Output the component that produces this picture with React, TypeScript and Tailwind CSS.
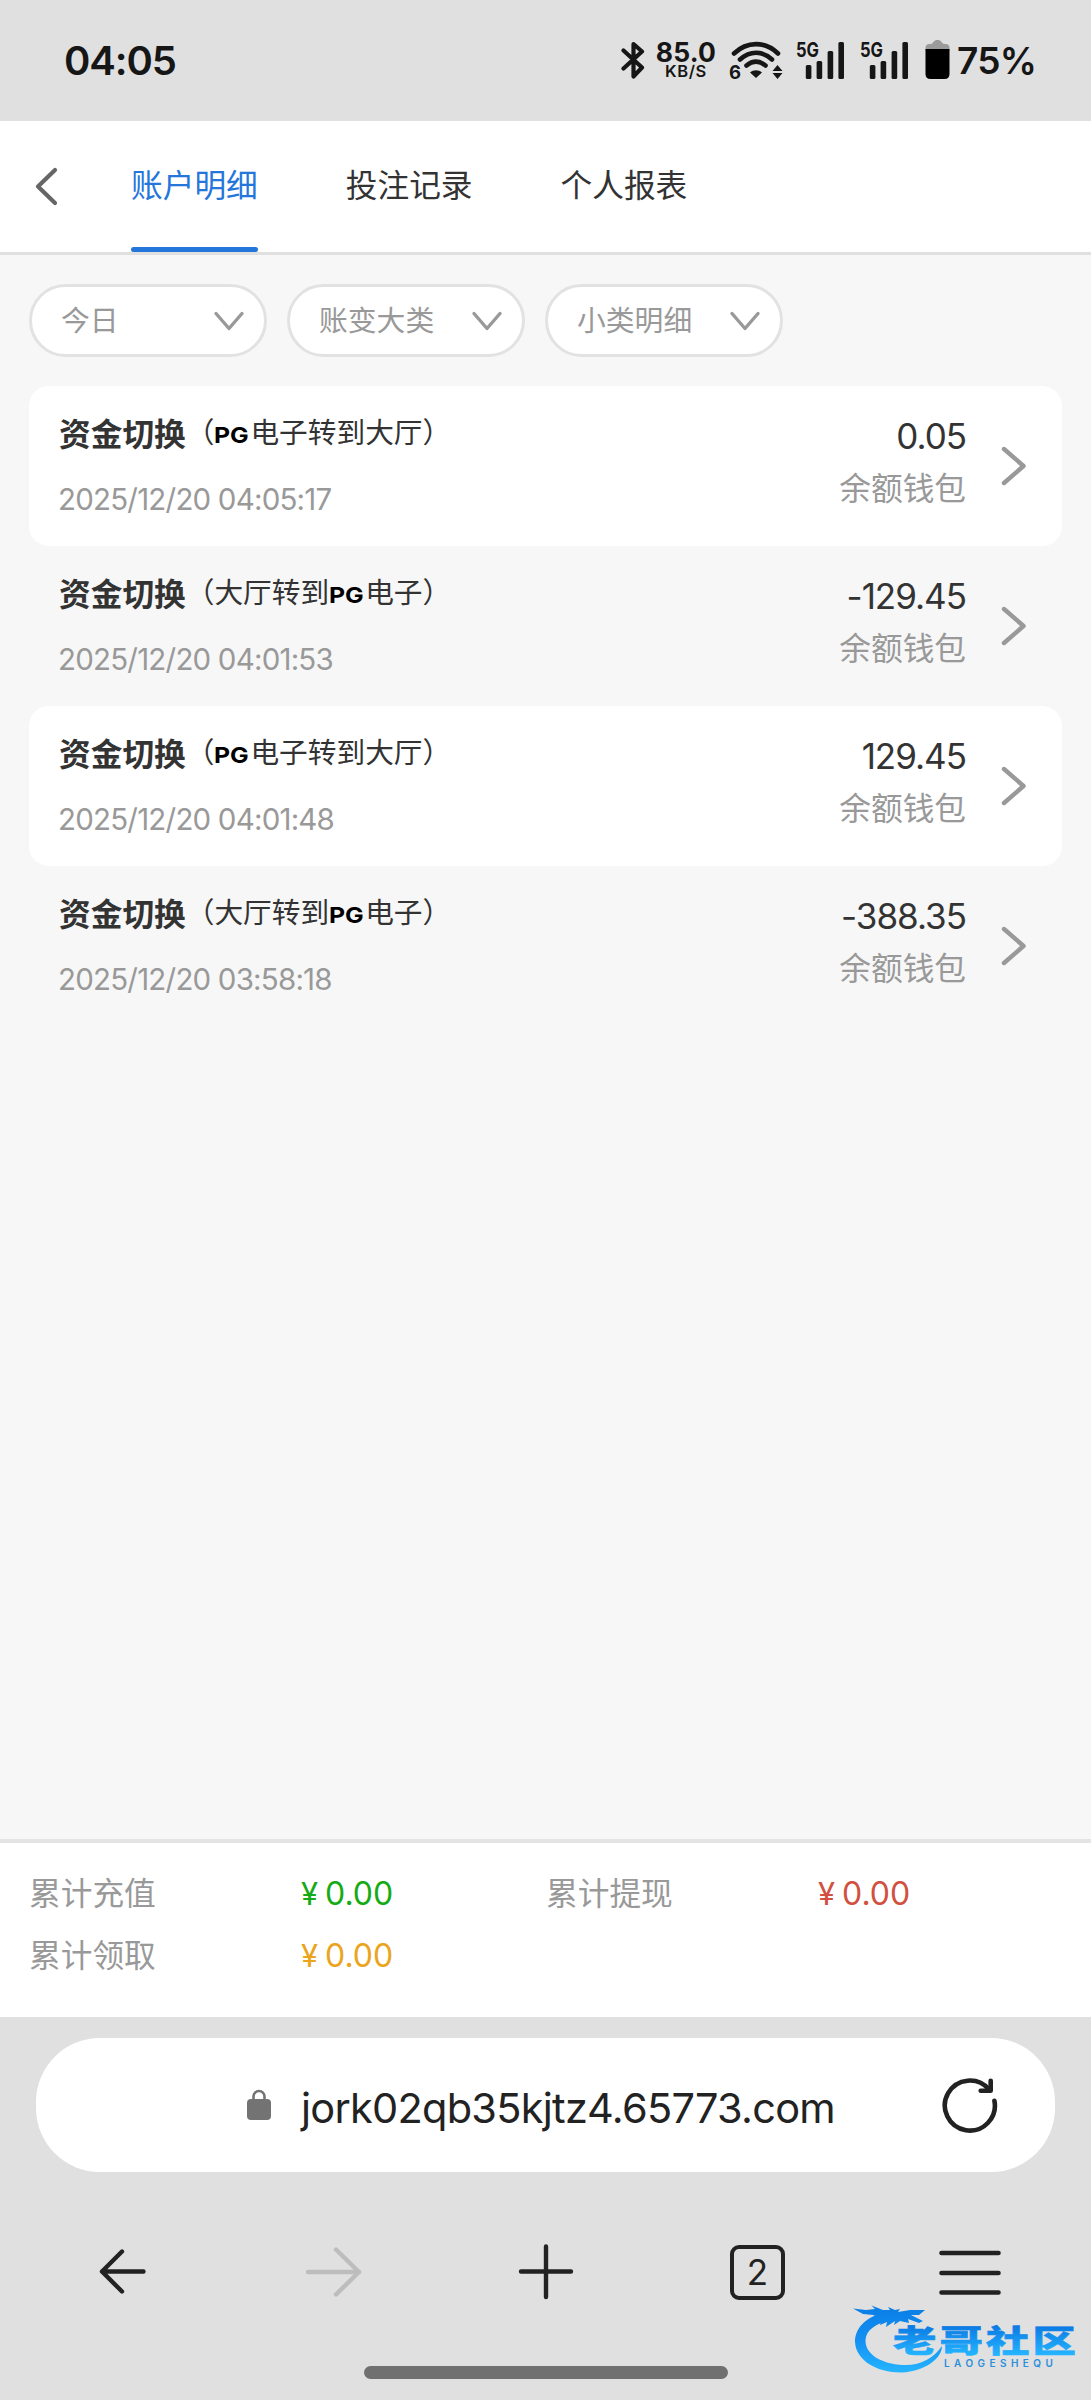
import React from 'react';

type TransferRow = {
  direction: 'in' | 'out';
  time: string;
  amount: string;
};

const tabs = ['账户明细', '投注记录', '个人报表'];
const filters = ['今日', '账变大类', '小类明细'];

const rows: TransferRow[] = [
  { direction: 'in', time: '2025/12/20 04:05:17', amount: '0.05' },
  { direction: 'out', time: '2025/12/20 04:01:53', amount: '-129.45' },
  { direction: 'in', time: '2025/12/20 04:01:48', amount: '129.45' },
  { direction: 'out', time: '2025/12/20 03:58:18', amount: '-388.35' },
];

const totals = [
  { label: '累计充值', value: '0.00', color: 'text-[#16ab16]' },
  { label: '累计提现', value: '0.00', color: 'text-[#d2503f]' },
  { label: '累计领取', value: '0.00', color: 'text-[#eaa51c]' },
];

const SignalBars: React.FC = () => (
  <svg className="w-[44px] h-[40px] shrink-0" viewBox="0 0 44 40" fill="#161616">
    <text x="0" y="17.5" fontSize="20.5" fontWeight="700" textLength="23" lengthAdjust="spacingAndGlyphs">5G</text>
    <rect x="9.8" y="26" width="5.6" height="14" rx="1.5" />
    <rect x="20.6" y="22" width="5.6" height="18" rx="1.5" />
    <rect x="31.6" y="12" width="5.6" height="28" rx="1.5" />
    <rect x="42.4" y="3" width="5.6" height="37" rx="1.5" />
  </svg>
);

const StatusBar: React.FC = () => (
  <header className="h-[121px] shrink-0 flex items-start justify-between pl-[64px] pr-[55px] bg-[#e0e0e0] text-[#161616]">
    <div className="mt-[37px] text-[40px] leading-[48px] font-semibold tracking-[-1.1px]">04:05</div>

    <div className="mt-[39px] flex items-start">
      <svg className="w-[24px] h-[40px]" viewBox="0 0 24 40" fill="none" stroke="#161616" strokeWidth="4.2" strokeLinejoin="round" strokeLinecap="round">
        <path d="M2.5 11.5 21 28.5 12.5 37.5V5L21 12.5 2.5 29.5" />
      </svg>

      <div className="ml-[11px] w-[60px] flex flex-col items-center">
        <span className="text-[26.5px] leading-[26px] font-bold tracking-[0.2px]">85.0</span>
        <span className="text-[16.5px] leading-[13px] font-semibold tracking-[0.6px]">KB/S</span>
      </div>

      {/* Wi-Fi 6 */}
      <svg className="ml-[13px] w-[54px] h-[40px] overflow-visible" viewBox="0 0 54 40" fill="none" stroke="#161616" strokeWidth="4.6" strokeLinecap="round">
        <path d="M5 14.5C18 2 36 2 49 14.5" />
        <path d="M11 20.5C21 11.5 33 11.5 43 20.5" />
        <path d="M17.5 26.5C24 21.3 30 21.3 36.5 26.5" />
        <path d="M27 39 21 33.5C24.5 30.5 29.5 30.5 33 33.5Z" fill="#161616" stroke="none" />
        <path d="m48.500 26 5 6h-10ZM48.500 40l5-6h-10Z" fill="#161616" stroke="none" />
        <text x="0" y="39.5" fontSize="18.5" fontWeight="700" fill="#161616" stroke="none">6</text>
      </svg>

      <div className="ml-[13px] flex gap-[20px] [&_svg]:overflow-visible">
        <SignalBars />
        <SignalBars />
      </div>

      <svg className="ml-[21px] w-[25px] h-[40px]" viewBox="0 0 25 40">
        <path d="M0.500 12V9Q0.500 5 4.500 5 7.500 5 8 3.500T11 1h3q2.500 1 3 2.500T20.500 5Q24.500 5 24.500 9v3Z" fill="#9b9b9b" />
        <path d="M0.500 10h24v25q0 5-5 5h-14q-5 0-5-5Z" fill="#000" />
      </svg>
      <span className="ml-[7px] mt-[1px] text-[37px] leading-[42px] font-semibold tracking-[-0.8px]">75%</span>
    </div>
  </header>
);

const PageHeader: React.FC = () => (
  <nav className="h-[134px] shrink-0 flex items-center bg-white border-b-[3px] border-[#e0e0e0]">
    <svg className="ml-[34px] mb-[2px] w-[26px] h-[40px]" viewBox="0 0 26 40" fill="none" stroke="#666" strokeWidth="4.2" strokeLinecap="round" strokeLinejoin="round">
      <path d="M21 4 4 20.500 21 37" />
    </svg>
    <div className="ml-[71px] h-full flex gap-[88px]">
      {tabs.map((tab, i) => (
        <div
          key={tab}
          className={
            i === 0
              ? 'relative flex items-center text-[31.7px] text-[#2576db] pb-[2px]'
              : 'relative flex items-center text-[31.7px] text-[#333] pb-[2px]'
          }
        >
          {tab}
          {i === 0 && <span className="absolute left-0 bottom-0 w-full h-[5px] rounded-full bg-[#2576db]"></span>}
        </div>
      ))}
    </div>
  </nav>
);

const FilterBar: React.FC = () => (
  <div className="mt-[29px] ml-[29px] flex gap-[20px]">
    {filters.map((name) => (
      <div key={name} className="w-[238px] h-[73px] flex items-center justify-between pl-[29px] pr-[19px] rounded-full border-[3px] border-[#e2e2e2] bg-white">
        <span className="text-[28.800px] leading-[40px] text-[#999]">{name}</span>
        <svg className="w-[32px] h-[24px]" viewBox="0 0 32 24" fill="none" stroke="#999" strokeWidth="3.4" strokeLinecap="round" strokeLinejoin="round">
          <path d="M3 4.500 16 19.500 29 4.500" />
        </svg>
      </div>
    ))}
  </div>
);

const PgLogo: React.FC = () => (
  <span className="inline-block w-[36px] text-black font-bold text-[22px] leading-[20px] origin-left scale-x-[1.13]">PG</span>
);

const Row: React.FC<{ row: TransferRow; raised: boolean }> = ({ row, raised }) => (
  <div className={raised ? 'h-[160px] flex rounded-[20px] bg-white' : 'h-[160px] flex rounded-[20px]'}>
    <div className="pl-[30px] pt-[29px] grow">
      <div className="flex items-center h-[40px] whitespace-nowrap">
        <span className="text-[31.7px] leading-[40px] font-bold text-[#333]">资金切换</span>
        <span className="text-[28.7px] leading-[40px] text-[#333] -translate-y-[2px]">
          {row.direction === 'in' ? (
            <>（<PgLogo />电子转到大厅）</>
          ) : (
            <>（大厅转到<PgLogo />电子）</>
          )}
        </span>
      </div>
      <div className="mt-[24px] -ml-px text-[29.500px] leading-[40px] text-[#999] tracking-[-0.8px]">{row.time}</div>
    </div>
    <div className="pt-[30px] text-right">
      <div className="text-[35px] leading-[40px] text-[#333] tracking-[-1px]">{row.amount}</div>
      <div className="mt-[13px] text-[31.7px] leading-[40px] text-[#999]">余额钱包</div>
    </div>
    <svg className="mt-[57px] ml-[33px] mr-[34px] w-[29px] h-[46px]" viewBox="0 0 29 46" fill="none" stroke="#999" strokeWidth="4.400" strokeLinecap="round" strokeLinejoin="round">
      <path d="M5 6 24.500 23 5 40" />
    </svg>
  </div>
);

const Totals: React.FC = () => (
  <section className="h-[178px] shrink-0 pt-[21px] pl-[29px] grid grid-cols-[517px_1fr] auto-rows-[62px] bg-white border-t-[4px] border-[#e4e4e4]">
    {totals.map((item) => (
      <div key={item.label} className="flex items-center h-[60px] text-[31.7px] leading-[40px]">
        <span className="w-[272px] text-[#999]">{item.label}</span>
        <span className={item.color}>
          <span className="text-[31px]">¥</span>
          <span className="ml-[7px] text-[32px]">{item.value}</span>
        </span>
      </div>
    ))}
  </section>
);

const AddressBar: React.FC = () => (
  <div className="mt-[21px] mx-[36px] h-[134px] shrink-0 flex items-center rounded-[64px] bg-white text-[#222]">
    <svg className="ml-[211px] w-[24px] h-[32px]" viewBox="0 0 24 32">
      <path d="M6.500 13V7.500a5.500 5.500 0 0 1 11 0V13" fill="none" stroke="#737373" strokeWidth="2.600" />
      <rect y="10" width="24" height="21" rx="4" fill="#737373" />
    </svg>
    <span className="ml-[30px] mt-[5px] w-[533px] text-[41.5px] leading-[50px] tracking-[-0.74px] whitespace-nowrap">jork02qb35kjtz4.65773.com</span>
    <svg className="ml-[106px] w-[60px] h-[60px]" viewBox="0 0 60 60" fill="none" stroke="#222" strokeWidth="4.600" strokeLinecap="round" strokeLinejoin="round">
      <path d="M54.400 25.800A25 25 0 1 1 49 14.500" />
      <path d="M50.700 5.700V15.700H40.700" />
    </svg>
  </div>
);

const BrowserNav: React.FC = () => (
  <div className="mt-[67px] h-[66px] mx-[90px] flex items-center justify-between text-[#222]">
    <svg className="w-[64px] h-[60px]" viewBox="0 0 64 60" fill="none" stroke="#222" strokeWidth="4.400" strokeLinecap="round" strokeLinejoin="round">
      <path d="M53.500 29.500H12M32 9.500 12 29.500 32 49.500" />
    </svg>
    <svg className="w-[64px] h-[60px]" viewBox="0 0 64 60" fill="none" stroke="#bdbdbd" strokeWidth="4.400" strokeLinecap="round" strokeLinejoin="round">
      <path d="M6 30H57M34 7.500 57 30 34 52.500" />
    </svg>
    <svg className="w-[64px] h-[60px]" viewBox="0 0 64 60" fill="none" stroke="#222" strokeWidth="4.400" strokeLinecap="round">
      <path d="M32 4.500V55M7 29.500H57" />
    </svg>
    <div className="mx-[4px] w-[55px] h-[55px] flex items-center justify-center rounded-[9px] border-[4px] border-[#222] text-[35px] leading-[40px]">2</div>
    <svg className="w-[64px] h-[60px]" viewBox="0 0 64 60" fill="none" stroke="#222" strokeWidth="4.600" strokeLinecap="round">
      <path d="M4.500 11H61.500M4.500 31H61.500M4.500 50.500H61.500" />
    </svg>
  </div>
);

// Community watermark floating over the bottom right corner
const Watermark: React.FC = () => (
  <svg className="absolute left-[850px] top-[2300px] w-[230px] h-[78px]" viewBox="0 0 230 78">
    <defs>
      <linearGradient id="wm" gradientUnits="userSpaceOnUse" x1="0" y1="8" x2="0" y2="72">
        <stop offset="0" stopColor="#0a7fe6" />
        <stop offset="0.5" stopColor="#1490f2" />
        <stop offset="1" stopColor="#24b4ff" />
      </linearGradient>
      <linearGradient id="wmText" x1="0" y1="0" x2="0" y2="1">
        <stop offset="0.25" stopColor="#0c7ce4" />
        <stop offset="0.85" stopColor="#24b4ff" />
      </linearGradient>
    </defs>
    <g fill="url(#wm)">
      <path d="M34 12C14 18 5 29 5 42 6 61 28 73 52 72.500 74 71.500 92 59 92 46 84 58 70 66 53 65 31 64 15 54 15.500 40 16 30 26 23 42 20Z" />
      <path d="M3 8.500 16 10 25 9 21.500 5.500 33 10 40 10 38 7 45 10 50 9 48 12 60 10 75 10 69 15 61 15 73 21 69 23 58 19 59 23 50 21 44 25 45 21 36 27 37 22 30 25 32 18 23 15 13 14Z" />
    </g>
    <text
      transform="translate(43 52) scale(1.4 1)"
      fontFamily="Noto Sans CJK SC, sans-serif"
      fontSize="31"
      fontWeight="900"
      letterSpacing="2.2"
      fill="url(#wmText)"
      stroke="url(#wmText)"
      strokeWidth="0.600"
    >
      老哥社区
    </text>
    <text x="94" y="66.5" fontSize="10" fontWeight="600" letterSpacing="4.200" textLength="113" fill="#2c8fdc">LAOGESHEQU</text>
  </svg>
);

const App: React.FC = () => {
  return (
    <div className="relative w-[1091px] h-[2400px] overflow-hidden flex flex-col bg-[#f7f7f7] font-['Inter','Noto_Sans_CJK_SC',sans-serif]">
      <StatusBar />
      <PageHeader />
      <FilterBar />

      <main className="mt-[29px] mx-[29px] grow">
        {rows.map((row, i) => (
          <Row key={row.time} row={row} raised={i % 2 === 0} />
        ))}
      </main>

      <Totals />

      <footer className="h-[383px] shrink-0 flex flex-col bg-[#e0e0e0]">
        <AddressBar />
        <BrowserNav />
        <div className="mt-[61px] mx-auto w-[364px] h-[13px] rounded-full bg-[#707070]"></div>
      </footer>

      <Watermark />
    </div>
  );
};

export default App;
